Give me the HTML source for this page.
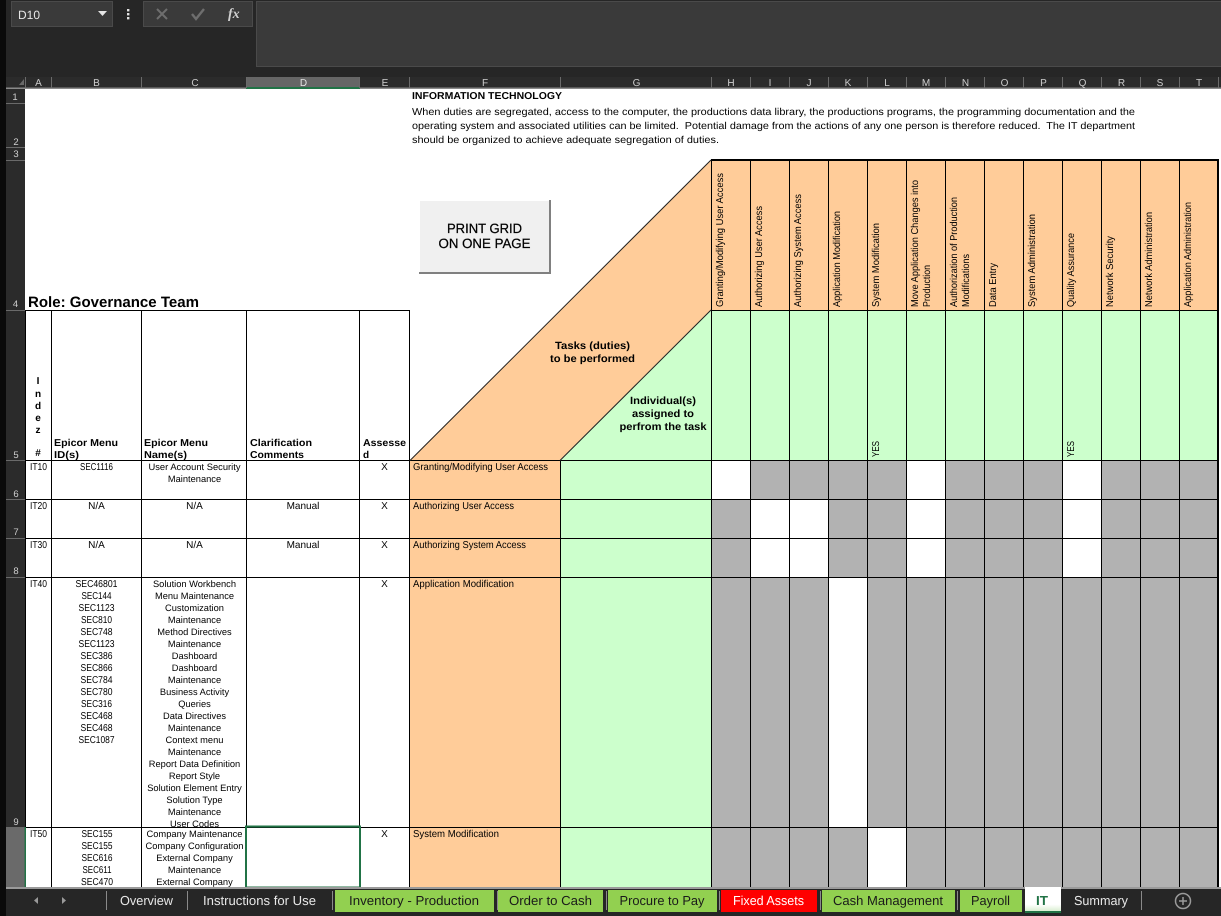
<!DOCTYPE html>
<html><head><meta charset="utf-8"><style>
html,body{margin:0;padding:0;background:#fff;width:1221px;height:916px;overflow:hidden}
svg{display:block;position:absolute;left:0;top:0}
text{font-family:"Liberation Sans",Arial,sans-serif;font-size:10px;fill:#000;white-space:pre}
.c{text-anchor:middle}
.b{font-weight:bold}
.h{fill:#cfcfcf;text-anchor:middle;font-size:10px}
.r{fill:#cfcfcf;text-anchor:middle;font-size:9.5px}
.t{font-size:13px;text-anchor:middle;fill:#e8e8e8}
.d{fill:#1a1a1a}
.n{font-size:9.3px;text-anchor:middle}
</style></head><body>
<svg width="1221" height="916" viewBox="0 0 1221 916" xmlns="http://www.w3.org/2000/svg" text-rendering="geometricPrecision">
<defs>
<clipPath id="c9"><rect x="25" y="577" width="1196" height="250"/></clipPath>
<linearGradient id="itg" x1="0" y1="0" x2="0" y2="1"><stop offset="0" stop-color="#ffffff"/><stop offset=".7" stop-color="#ffffff"/><stop offset="1" stop-color="#d5eccb"/></linearGradient>
</defs>
<!-- chrome -->
<rect width="1221" height="916" fill="#262626"/>
<rect x="0" y="0" width="6" height="916" fill="#0a0a0a"/>
<rect x="11.5" y="1.5" width="101" height="25" fill="#3a3a3a" stroke="#4a4a4a"/>
<text x="18" y="19" style="font-size:12px;fill:#e6e6e6">D10</text>
<path d="M98 11h9l-4.5 5z" fill="#e6e6e6"/>
<rect x="127" y="9" width="2.4" height="2.4" fill="#e0e0e0"/><rect x="127" y="13" width="2.4" height="2.4" fill="#e0e0e0"/><rect x="127" y="17" width="2.4" height="2.4" fill="#e0e0e0"/>
<rect x="143.5" y="1.5" width="109" height="25" fill="#3a3a3a" stroke="#4a4a4a"/>
<path d="M157 9l10 10M167 9l-10 10" stroke="#6e6e6e" stroke-width="2" fill="none"/>
<path d="M192 14l4 5 8-10" stroke="#6e6e6e" stroke-width="2.4" fill="none"/>
<text x="228" y="18" style="font-family:'Liberation Serif',serif;font-size:14px;font-style:italic;font-weight:bold;fill:#d0d0d0">fx</text>
<rect x="256.5" y="1.5" width="970" height="65" fill="#3a3a3a" stroke="#4a4a4a"/>
<!-- column headers -->
<rect x="6" y="77" width="1215" height="11" fill="#2b2b2b"/>
<path d="M24 79v6h-5z" fill="#6a6a6a"/>
<rect x="246" y="77" width="114" height="10" fill="#666"/>
<rect x="6" y="87.5" width="1215" height="1.5" fill="#8a8a8a"/>
<rect x="246" y="87" width="114" height="2" fill="#217346"/>
<path d="M25.5 77v11M51.5 77v11M141.5 77v11M246.5 77v11M359.5 77v11M409.5 77v11M560.5 77v11M711.5 77v11M750.5 77v11M789.5 77v11M828.5 77v11M867.5 77v11M906.5 77v11M945.5 77v11M984.5 77v11M1023.5 77v11M1062.5 77v11M1101.5 77v11M1140.5 77v11M1179.5 77v11M1218.5 77v11" stroke="#6a6a6a"/>
<text class="h" x="38.5" y="86">A</text><text class="h" x="96.5" y="86">B</text><text class="h" x="195" y="86">C</text><text class="h" x="303.5" y="86" style="fill:#e6e6e6">D</text><text class="h" x="385" y="86">E</text><text class="h" x="485" y="86">F</text><text class="h" x="636.5" y="86">G</text><text class="h" x="731" y="86">H</text><text class="h" x="770" y="86">I</text><text class="h" x="809" y="86">J</text><text class="h" x="848" y="86">K</text><text class="h" x="887" y="86">L</text><text class="h" x="926" y="86">M</text><text class="h" x="965.5" y="86">N</text><text class="h" x="1004.5" y="86">O</text><text class="h" x="1043.5" y="86">P</text><text class="h" x="1082.5" y="86">Q</text><text class="h" x="1121.5" y="86">R</text><text class="h" x="1160" y="86">S</text><text class="h" x="1199" y="86">T</text>
<!-- row headers -->
<rect x="6" y="89" width="19" height="798" fill="#2b2b2b"/>
<rect x="6" y="827" width="19" height="60" fill="#6a6a6a"/>
<path d="M6 103.500h19M6 147.500h19M6 160.500h19M6 310.500h19M6 460.500h19M6 499.500h19M6 538.500h19M6 577.500h19M6 827.500h19" stroke="#6a6a6a"/>
<text class="r" x="15" y="100">1</text><text class="r" x="16" y="145">2</text><text class="r" x="16" y="157">3</text><text class="r" x="15.500" y="307">4</text><text class="r" x="16" y="458">5</text><text class="r" x="16" y="497">6</text><text class="r" x="16" y="535">7</text><text class="r" x="16" y="574">8</text><text class="r" x="16" y="825">9</text>
<!-- sheet -->
<rect x="25" y="89" width="1196" height="798" fill="#fff"/>
<!-- fills -->
<polygon points="410,460 711,160 711,310 560,460" fill="#ffcc99"/>
<polygon points="560,460 711,310 711,460" fill="#ccffcc"/>
<rect x="711" y="160" width="507" height="150" fill="#ffcc99"/>
<rect x="711" y="310" width="507" height="150" fill="#ccffcc"/>
<rect x="410" y="460" width="151" height="427" fill="#ffcc99"/>
<rect x="560" y="460" width="151" height="427" fill="#ccffcc"/>
<rect x="711" y="460" width="507" height="427" fill="#b2b2b2"/>
<!-- white cells -->
<g fill="#fff">
<rect x="711" y="460" width="39" height="39"/><rect x="906" y="460" width="39" height="39"/><rect x="1062" y="460" width="39" height="39"/>
<rect x="750" y="499" width="78" height="78"/><rect x="906" y="499" width="39" height="78"/><rect x="1062" y="499" width="39" height="78"/>
<rect x="828" y="577" width="39" height="250"/>
<rect x="867" y="827" width="39" height="60"/>
</g>
<!-- grid lines -->
<path d="M25.500 310.500H410M25.500 460.500H1218M25.500 499.500H1218M25.500 538.500H1218M25.500 577.500H1218M25.500 827.500H1218M711 310.500H1218" stroke="#000" fill="none"/>
<path d="M25.500 310V887M51.500 310V887M141.500 310V887M246.500 310V887M359.500 310V887M409.500 310V887M560.500 460V887M711.500 160V887M750.500 160V887M789.500 160V887M828.500 160V887M867.500 160V887M906.500 160V887M945.500 160V887M984.500 160V887M1023.500 160V887M1062.500 160V887M1101.500 160V887M1140.500 160V887M1179.500 160V887" stroke="#000" fill="none"/>
<rect x="711" y="159" width="508" height="2" fill="#000"/>
<rect x="1217" y="159" width="2" height="728" fill="#000"/>
<path d="M410 460.500L711 160M560 460.500L711 310" stroke="#222" stroke-width="1" fill="none"/>
<!-- info -->
<text class="b" x="412" y="99" textLength="150" lengthAdjust="spacingAndGlyphs">INFORMATION TECHNOLOGY</text>
<text x="412" y="115" textLength="723" lengthAdjust="spacingAndGlyphs">When duties are segregated, access to the computer, the productions data library, the productions programs, the programming documentation and the</text>
<text x="412" y="129" textLength="723" lengthAdjust="spacingAndGlyphs">operating system and associated utilities can be limited.  Potential damage from the actions of any one person is therefore reduced.  The IT department</text>
<text x="412" y="143" textLength="307" lengthAdjust="spacingAndGlyphs">should be organized to achieve adequate segregation of duties.</text>
<!-- button -->
<rect x="419" y="200" width="132" height="74" fill="#808080"/>
<rect x="419" y="200" width="130" height="72" fill="#fff"/>
<rect x="420" y="201" width="129" height="71" fill="#f0f0f0"/>
<text class="c" x="484.500" y="233" style="font-size:13.500px;stroke:#000;stroke-width:.25px" textLength="75" lengthAdjust="spacingAndGlyphs">PRINT GRID</text>
<text class="c" x="484.500" y="248" style="font-size:13.500px;stroke:#000;stroke-width:.25px" textLength="92" lengthAdjust="spacingAndGlyphs">ON ONE PAGE</text>
<!-- title -->
<text class="b" x="28" y="307" style="font-size:15px" textLength="171" lengthAdjust="spacingAndGlyphs">Role: Governance Team</text>
<!-- diag labels -->
<text class="b c" x="592.500" y="349" style="font-size:10.500px" textLength="75" lengthAdjust="spacingAndGlyphs">Tasks (duties)</text>
<text class="b c" x="592.500" y="362" style="font-size:10.500px" textLength="85" lengthAdjust="spacingAndGlyphs">to be performed</text>
<text class="b c" x="663" y="404" style="font-size:10.500px" textLength="66" lengthAdjust="spacingAndGlyphs">Individual(s)</text>
<text class="b c" x="663" y="417" style="font-size:10.500px" textLength="62" lengthAdjust="spacingAndGlyphs">assigned to</text>
<text class="b c" x="663" y="430" style="font-size:10.500px" textLength="87" lengthAdjust="spacingAndGlyphs">perfrom the task</text>
<!-- table header -->
<g>
<text class="b c" x="38" y="384">I</text><text class="b c" x="38" y="397">n</text><text class="b c" x="38" y="409">d</text><text class="b c" x="38" y="421">e</text><text class="b c" x="38" y="433">z</text><text class="b c" x="38" y="456">#</text>
<text class="b" x="54" y="446" textLength="64" lengthAdjust="spacingAndGlyphs">Epicor Menu</text>
<text class="b" x="54" y="458" textLength="25" lengthAdjust="spacingAndGlyphs">ID(s)</text>
<text class="b" x="144" y="446" textLength="64" lengthAdjust="spacingAndGlyphs">Epicor Menu</text>
<text class="b" x="144" y="458" textLength="43" lengthAdjust="spacingAndGlyphs">Name(s)</text>
<text class="b" x="250" y="446" textLength="62" lengthAdjust="spacingAndGlyphs">Clarification</text>
<text class="b" x="250" y="458" textLength="54" lengthAdjust="spacingAndGlyphs">Comments</text>
<text class="b" x="363" y="446" textLength="43" lengthAdjust="spacingAndGlyphs">Assesse</text>
<text class="b" x="363" y="458">d</text>
</g>
<!-- rotated headers -->
<g>
<text transform="translate(723,307) rotate(-90)" textLength="134" lengthAdjust="spacingAndGlyphs">Granting/Modifying User Access</text>
<text transform="translate(762,307) rotate(-90)" textLength="101" lengthAdjust="spacingAndGlyphs">Authorizing User Access</text>
<text transform="translate(801,307) rotate(-90)" textLength="113" lengthAdjust="spacingAndGlyphs">Authorizing System Access</text>
<text transform="translate(840,307) rotate(-90)" textLength="96" lengthAdjust="spacingAndGlyphs">Application Modification</text>
<text transform="translate(879,307) rotate(-90)" textLength="84" lengthAdjust="spacingAndGlyphs">System Modification</text>
<text transform="translate(918,307) rotate(-90)" textLength="127" lengthAdjust="spacingAndGlyphs">Move Application Changes into</text>
<text transform="translate(930,307) rotate(-90)" textLength="42" lengthAdjust="spacingAndGlyphs">Production</text>
<text transform="translate(957,307) rotate(-90)" textLength="110" lengthAdjust="spacingAndGlyphs">Authorization of Production</text>
<text transform="translate(969,307) rotate(-90)" textLength="53" lengthAdjust="spacingAndGlyphs">Modifications</text>
<text transform="translate(996,307) rotate(-90)" textLength="44" lengthAdjust="spacingAndGlyphs">Data Entry</text>
<text transform="translate(1035,307) rotate(-90)" textLength="93" lengthAdjust="spacingAndGlyphs">System Administration</text>
<text transform="translate(1074,307) rotate(-90)" textLength="74" lengthAdjust="spacingAndGlyphs">Quality Assurance</text>
<text transform="translate(1113,307) rotate(-90)" textLength="71" lengthAdjust="spacingAndGlyphs">Network Security</text>
<text transform="translate(1152,307) rotate(-90)" textLength="95" lengthAdjust="spacingAndGlyphs">Network Administration</text>
<text transform="translate(1191,307) rotate(-90)" textLength="105" lengthAdjust="spacingAndGlyphs">Application Administration</text>
<text transform="translate(879,457) rotate(-90)" textLength="16" lengthAdjust="spacingAndGlyphs">YES</text>
<text transform="translate(1074,457) rotate(-90)" textLength="16" lengthAdjust="spacingAndGlyphs">YES</text>
</g>
<!-- rows -->
<text x="30" y="470" textLength="17" lengthAdjust="spacingAndGlyphs">IT10</text><text class="c" x="96.500" y="470" textLength="33" lengthAdjust="spacingAndGlyphs">SEC1116</text><text class="n" x="194.500" y="470" textLength="92" lengthAdjust="spacingAndGlyphs">User Account Security</text><text class="n" x="194.500" y="482">Maintenance</text><text class="c" x="384.500" y="470">X</text>
<text x="413" y="470" textLength="135" lengthAdjust="spacingAndGlyphs">Granting/Modifying User Access</text>
<text x="30" y="509" textLength="17" lengthAdjust="spacingAndGlyphs">IT20</text><text class="c" x="96.500" y="509">N/A</text><text class="c" x="194.500" y="509">N/A</text><text class="c" x="303" y="509">Manual</text><text class="c" x="384.500" y="509">X</text>
<text x="413" y="509" textLength="101" lengthAdjust="spacingAndGlyphs">Authorizing User Access</text>
<text x="30" y="548" textLength="17" lengthAdjust="spacingAndGlyphs">IT30</text><text class="c" x="96.500" y="548">N/A</text><text class="c" x="194.500" y="548">N/A</text><text class="c" x="303" y="548">Manual</text><text class="c" x="384.500" y="548">X</text>
<text x="413" y="548" textLength="113" lengthAdjust="spacingAndGlyphs">Authorizing System Access</text>
<text x="30" y="587" textLength="17" lengthAdjust="spacingAndGlyphs">IT40</text><text class="c" x="384.500" y="587">X</text>
<text x="413" y="587" textLength="101" lengthAdjust="spacingAndGlyphs">Application Modification</text>
<g>
<text class="c" x="96.500" y="587" textLength="42" lengthAdjust="spacingAndGlyphs">SEC46801</text><text class="c" x="96.500" y="599" textLength="30" lengthAdjust="spacingAndGlyphs">SEC144</text><text class="c" x="96.500" y="611" textLength="36" lengthAdjust="spacingAndGlyphs">SEC1123</text><text class="c" x="96.500" y="623" textLength="31" lengthAdjust="spacingAndGlyphs">SEC810</text><text class="c" x="96.500" y="635" textLength="32" lengthAdjust="spacingAndGlyphs">SEC748</text><text class="c" x="96.500" y="647" textLength="36" lengthAdjust="spacingAndGlyphs">SEC1123</text><text class="c" x="96.500" y="659" textLength="32" lengthAdjust="spacingAndGlyphs">SEC386</text><text class="c" x="96.500" y="671" textLength="32" lengthAdjust="spacingAndGlyphs">SEC866</text><text class="c" x="96.500" y="683" textLength="32" lengthAdjust="spacingAndGlyphs">SEC784</text><text class="c" x="96.500" y="695" textLength="32" lengthAdjust="spacingAndGlyphs">SEC780</text><text class="c" x="96.500" y="707" textLength="31" lengthAdjust="spacingAndGlyphs">SEC316</text><text class="c" x="96.500" y="719" textLength="32" lengthAdjust="spacingAndGlyphs">SEC468</text><text class="c" x="96.500" y="731" textLength="32" lengthAdjust="spacingAndGlyphs">SEC468</text><text class="c" x="96.500" y="743" textLength="36" lengthAdjust="spacingAndGlyphs">SEC1087</text>
</g>
<g clip-path="url(#c9)">
<text class="n" x="194.500" y="587">Solution Workbench</text><text class="n" x="194.500" y="599">Menu Maintenance</text><text class="n" x="194.500" y="611">Customization</text><text class="n" x="194.500" y="623">Maintenance</text><text class="n" x="194.500" y="635">Method Directives</text><text class="n" x="194.500" y="647">Maintenance</text><text class="n" x="194.500" y="659">Dashboard</text><text class="n" x="194.500" y="671">Dashboard</text><text class="n" x="194.500" y="683">Maintenance</text><text class="n" x="194.500" y="695">Business Activity</text><text class="n" x="194.500" y="707">Queries</text><text class="n" x="194.500" y="719">Data Directives</text><text class="n" x="194.500" y="731">Maintenance</text><text class="n" x="194.500" y="743">Context menu</text><text class="n" x="194.500" y="755">Maintenance</text><text class="n" x="194.500" y="767">Report Data Definition</text><text class="n" x="194.500" y="779">Report Style</text><text class="n" x="194.500" y="791">Solution Element Entry</text><text class="n" x="194.500" y="803">Solution Type</text><text class="n" x="194.500" y="815">Maintenance</text><text class="n" x="194.500" y="827">User Codes</text>
</g>
<text x="30" y="837" textLength="17" lengthAdjust="spacingAndGlyphs">IT50</text><text class="c" x="384.500" y="837">X</text>
<text x="413" y="837" textLength="86" lengthAdjust="spacingAndGlyphs">System Modification</text>
<text class="c" x="97" y="837" textLength="31" lengthAdjust="spacingAndGlyphs">SEC155</text><text class="c" x="97" y="849" textLength="31" lengthAdjust="spacingAndGlyphs">SEC155</text><text class="c" x="97" y="861" textLength="31" lengthAdjust="spacingAndGlyphs">SEC616</text><text class="c" x="97" y="873" textLength="29" lengthAdjust="spacingAndGlyphs">SEC611</text><text class="c" x="97" y="885" textLength="32" lengthAdjust="spacingAndGlyphs">SEC470</text>
<text class="n" x="194.500" y="837" textLength="96" lengthAdjust="spacingAndGlyphs">Company Maintenance</text><text class="n" x="194.500" y="849" textLength="98" lengthAdjust="spacingAndGlyphs">Company Configuration</text><text class="n" x="194.500" y="861">External Company</text><text class="n" x="194.500" y="873">Maintenance</text><text class="n" x="194.500" y="885">External Company</text>
<!-- selection -->
<rect x="24.500" y="827" width="1.500" height="60" fill="#217346"/>
<rect x="246" y="826.500" width="114" height="61" fill="none" stroke="#217346" stroke-width="2"/>
<rect x="1219" y="89" width="2" height="798" fill="#fff"/>
<!-- tab bar -->
<rect x="6" y="887" width="1215" height="29" fill="#262626"/>
<rect x="6" y="887" width="1215" height="2" fill="#9a9a9a"/>
<path d="M38 897v7l-4-3.500z" fill="#9a9a9a"/><path d="M62 897v7l4-3.500z" fill="#9a9a9a"/>
<path d="M106.500 891v19M187.500 891v19M332.500 891v19M497.500 891v19M606.500 891v19M719.500 891v19M820.500 891v19M957.500 891v19M1141.500 891v19" stroke="#8a8a8a"/>
<text class="t" x="146.500" y="905" textLength="53" lengthAdjust="spacingAndGlyphs">Overview</text>
<text class="t" x="259.500" y="905" textLength="113" lengthAdjust="spacingAndGlyphs">Instructions for Use</text>
<rect x="335" y="890" width="159" height="22" fill="#92d050"/>
<text class="t d" x="414" y="905" textLength="130" lengthAdjust="spacingAndGlyphs">Inventory - Production</text>
<rect x="498" y="890" width="105" height="22" fill="#92d050"/>
<text class="t d" x="550.500" y="905" textLength="83" lengthAdjust="spacingAndGlyphs">Order to Cash</text>
<rect x="608" y="890" width="109" height="22" fill="#92d050"/>
<text class="t d" x="662" y="905" textLength="85" lengthAdjust="spacingAndGlyphs">Procure to Pay</text>
<rect x="721" y="890" width="96" height="22" fill="#ff0000"/>
<text class="t" x="768.500" y="905" style="fill:#fff" textLength="71" lengthAdjust="spacingAndGlyphs">Fixed Assets</text>
<rect x="822" y="890" width="133" height="22" fill="#92d050"/>
<text class="t d" x="888" y="905" textLength="110" lengthAdjust="spacingAndGlyphs">Cash Management</text>
<rect x="960" y="890" width="62" height="22" fill="#92d050"/>
<text class="t d" x="990.500" y="905" textLength="39" lengthAdjust="spacingAndGlyphs">Payroll</text>
<rect x="1025" y="887" width="36" height="25" fill="url(#itg)"/>
<rect x="1025" y="911" width="36" height="2" fill="#217346"/>
<text class="t b" x="1042" y="905" style="fill:#217346;font-weight:bold" textLength="12" lengthAdjust="spacingAndGlyphs">IT</text>
<text class="t" x="1101" y="905" textLength="54" lengthAdjust="spacingAndGlyphs">Summary</text>
<circle cx="1183" cy="901" r="7.500" fill="none" stroke="#9a9a9a" stroke-width="1.500"/>
<path d="M1183 897v8M1179 901h8" stroke="#9a9a9a" stroke-width="1.500"/>
</svg>
</body></html>
